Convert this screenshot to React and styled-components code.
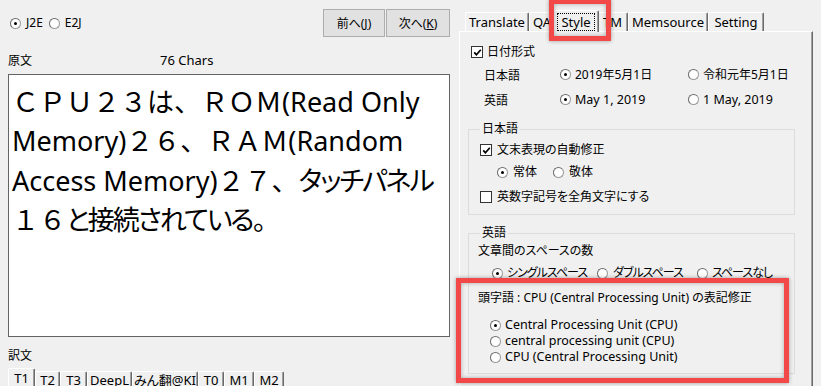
import React from "react";
import styled, { createGlobalStyle } from "styled-components";

const GlobalStyle = createGlobalStyle`
  html, body {
    margin: 0;
    padding: 0;
    background: #f0f0f0;
  }
  body {
    font-family: "Noto Sans", "Noto Sans CJK JP", sans-serif;
    color: #000;
  }
`;

const Window = styled.div`
  position: relative;
  display: flex;
  width: 821px;
  height: 386px;
  overflow: hidden;
  background: #f0f0f0;
  font-size: 12px;
  font-feature-settings: "palt";
`;

/* ---------- left pane ---------- */

const LeftPane = styled.div`
  width: 459px;
  flex: none;
  box-sizing: border-box;
  padding: 9px 9px 0 8px;
  display: flex;
  flex-direction: column;
`;

const TopRow = styled.div`
  display: flex;
  align-items: center;
  justify-content: space-between;
  height: 28px;
`;

const ModeGroup = styled.div`
  display: flex;
  align-items: center;
  gap: 6px;
  padding-left: 2px;
`;

const Option = styled.label`
  display: inline-flex;
  align-items: center;
  gap: ${(p) => p.$gap || 5}px;
  width: ${(p) => (p.$w ? `${p.$w}px` : "auto")};
  flex: none;
  font-size: ${(p) => p.$size || 12}px;
  letter-spacing: ${(p) => p.$track || 0}px;
  line-height: 16px;
  white-space: nowrap;
`;

const Radio = styled.span`
  position: relative;
  flex: none;
  width: 9px;
  height: 9px;
  border-radius: 50%;
  border: 1px solid #9a9a9a;
  border-top-color: #6a6a6a;
  border-left-color: #6a6a6a;
  background: #fff;

  &::after {
    content: "";
    position: absolute;
    left: 3px;
    top: 3px;
    width: 3px;
    height: 3px;
    border-radius: 50%;
    background: ${(p) => (p.$checked ? "#000" : "transparent")};
  }
`;

const Box = styled.span`
  flex: none;
  width: 10px;
  height: 10px;
  border: 1px solid #333;
  background: #fff;
  display: inline-flex;
  align-items: center;
  justify-content: center;
`;

const ButtonGroup = styled.div`
  display: flex;
  gap: 1px;
`;

const Button = styled.button`
  width: ${(p) => p.$w}px;
  height: 28px;
  padding: 0;
  border: 1px solid #adadad;
  background: #e1e1e1;
  color: #000;
  font-family: inherit;
  font-size: 12px;
`;

const LabelRow = styled.div`
  display: flex;
  align-items: center;
  height: 16px;
  margin-top: ${(p) => p.$top}px;
  font-size: 12px;
`;

const FieldLabel = styled.span`
  width: ${(p) => (p.$w ? `${p.$w}px` : "auto")};
  font-size: ${(p) => p.$size || 12}px;
`;

const SourceBox = styled.div`
  margin-top: 6px;
  height: 263px;
  box-sizing: border-box;
  border: 1px solid #646464;
  background: #fff;
  padding: 7px 0 0 3px;
  font-size: 27px;
  line-height: 39.4px;
  white-space: nowrap;
  font-feature-settings: normal;
`;

const Kana = styled.span`
  font-feature-settings: "palt";
  letter-spacing: -2px;
`;

const TabRow = styled.div`
  display: flex;
  align-items: flex-end;
  height: ${(p) => p.$h}px;
  margin-top: ${(p) => p.$top || 0}px;
  padding-left: ${(p) => p.$pad || 0}px;
  flex: none;
`;

const Tab = styled.div`
  position: relative;
  z-index: ${(p) => (p.$active ? 2 : 1)};
  width: ${(p) => p.$w}px;
  height: ${(p) => (p.$active ? p.$h + 3 : p.$h)}px;
  margin: ${(p) => (p.$active && p.$lift ? "0 -2px -1px" : "0")};
  box-sizing: border-box;
  flex: none;
  display: flex;
  align-items: ${(p) => (p.$lift ? "center" : "flex-start")};
  justify-content: center;
  padding-top: ${(p) => (p.$lift ? 0 : p.$active ? 1 : 0)}px;
  background: #f0f0f0;
  border-top: 1px solid #fff;
  border-left: 1px solid #fff;
  border-right: 1px solid #696969;
  border-radius: 2px 2px 0 0;
  box-shadow: inset -1px 0 0 #a0a0a0;
  font-size: 13px;
  line-height: 16px;
  white-space: nowrap;
`;

const Focus = styled.span`
  border: 1px dotted #000;
  padding: 0 3px;
`;

/* ---------- right pane ---------- */

const RightPane = styled.div`
  flex: 1;
  box-sizing: border-box;
  padding: 10px 8px 0 0;
  display: flex;
  flex-direction: column;
`;

const Panel = styled.div`
  flex: 1;
  box-sizing: border-box;
  border-top: 1px solid #fff;
  border-left: 1px solid #fff;
  border-right: 1px solid #696969;
  box-shadow: inset -1px 0 0 #a0a0a0;
  padding: 11px 17px 0 8px;
  display: flex;
  flex-direction: column;
`;

const CheckRow = styled.div`
  display: flex;
  align-items: center;
  height: ${(p) => p.$h || 18}px;
  margin-top: ${(p) => p.$top || 0}px;
  padding-left: ${(p) => p.$pad || 0}px;
`;

const DateGrid = styled.div`
  display: grid;
  grid-template-columns: 76px 128px auto;
  grid-auto-rows: 25px;
  align-items: center;
  margin-top: 1px;
  padding-left: 16px;
`;

const Group = styled.fieldset`
  margin: ${(p) => p.$top}px 0 0;
  padding: ${(p) => p.$padTop}px 10px ${(p) => p.$padBottom}px 11px;
  border: 1px solid #dcdcdc;
  min-width: 0;
`;

const Legend = styled.legend`
  padding: 0 2px;
  font-size: 12px;
  line-height: 16px;
`;

const OptionRow = styled.div`
  display: flex;
  align-items: center;
  height: ${(p) => p.$h}px;
  margin-top: ${(p) => p.$top || 0}px;
  padding-left: ${(p) => p.$pad || 0}px;
`;

const PlainLabel = styled.div`
  height: ${(p) => p.$h}px;
  margin-top: ${(p) => p.$top || 0}px;
  margin-left: -2px;
  display: flex;
  align-items: center;
  font-size: 12px;
  white-space: nowrap;
`;

const OptionList = styled.div`
  margin-top: 11px;
  padding-left: 10px;
  display: flex;
  flex-direction: column;
`;

const Highlight = styled.div`
  position: absolute;
  left: ${(p) => p.$x}px;
  top: ${(p) => p.$y}px;
  width: ${(p) => p.$w}px;
  height: ${(p) => p.$h}px;
  box-sizing: border-box;
  border: 5px solid #f24848;
  box-shadow: 0 0 4px rgba(0, 0, 0, 0.35), inset 0 0 4px rgba(0, 0, 0, 0.3);
  pointer-events: none;
  z-index: 10;
`;

const Tick = () => (
  <svg width="9" height="9" viewBox="0 0 9 9">
    <path d="M1.2 4.4 L3.4 6.7 L7.8 1.8" fill="none" stroke="#000" strokeWidth="1.7" />
  </svg>
);

const CheckBox = ({ checked, children, gap = 4 }) => (
  <Option $gap={gap}>
    <Box>{checked && <Tick />}</Box>
    {children}
  </Option>
);

const RadioOption = ({ checked, children, w, gap = 5, size, track }) => (
  <Option $w={w} $gap={gap} $size={size} $track={track}>
    <Radio $checked={checked} />
    {children}
  </Option>
);

const topTabs = [
  { label: "Translate", w: 64 },
  { label: "QA", w: 26 },
  { label: "Style", w: 46, active: true },
  { label: "TM", w: 31 },
  { label: "Memsource", w: 80 },
  { label: "Setting", w: 56 },
];

const bottomTabs = [
  { label: "T1", w: 27, active: true },
  { label: "T2", w: 25 },
  { label: "T3", w: 27 },
  { label: "DeepL", w: 45 },
  { label: "みん翻@KI", w: 66 },
  { label: "T0", w: 26 },
  { label: "M1", w: 30 },
  { label: "M2", w: 30 },
];

export default function App() {
  return (
    <>
      <GlobalStyle />
      <Window>
        <LeftPane>
          <TopRow>
            <ModeGroup>
              <RadioOption checked>J2E</RadioOption>
              <RadioOption>E2J</RadioOption>
            </ModeGroup>
            <ButtonGroup>
              <Button $w={62}>
                前へ(<u>J</u>)
              </Button>
              <Button $w={64}>
                次へ(<u>K</u>)
              </Button>
            </ButtonGroup>
          </TopRow>

          <LabelRow $top={15}>
            <FieldLabel $w={152}>原文</FieldLabel>
            <FieldLabel $size={13}>76 Chars</FieldLabel>
          </LabelRow>

          <SourceBox>
            <div>ＣＰＵ２３は、ＲＯＭ(Read Only</div>
            <div>Memory)２６、ＲＡＭ(Random</div>
            <div>
              Access Memory)２７、<Kana>タッチパネル</Kana>
            </div>
            <div>
              １６<Kana>と接続されている。</Kana>
            </div>
          </SourceBox>

          <LabelRow $top={10}>
            <FieldLabel>訳文</FieldLabel>
          </LabelRow>

          <TabRow $h={18} $top={5}>
            {bottomTabs.map((t) => (
              <Tab key={t.label} $w={t.w} $h={15} $active={t.active}>
                {t.label}
              </Tab>
            ))}
          </TabRow>
        </LeftPane>

        <RightPane>
          <TabRow $h={21} $pad={6}>
            {topTabs.map((t) => (
              <Tab key={t.label} $w={t.w} $h={19} $active={t.active} $lift>
                {t.active ? <Focus>{t.label}</Focus> : t.label}
              </Tab>
            ))}
          </TabRow>

          <Panel>
            <CheckRow $pad={3}>
              <CheckBox checked>日付形式</CheckBox>
            </CheckRow>
            <DateGrid>
              <span>日本語</span>
              <RadioOption checked gap={4}>2019年5月1日</RadioOption>
              <RadioOption gap={4}>令和元年5月1日</RadioOption>
              <span>英語</span>
              <RadioOption checked gap={4} size={12.5}>May 1, 2019</RadioOption>
              <RadioOption gap={4} size={12.5}>1 May, 2019</RadioOption>
            </DateGrid>

            <Group $top={9} $padTop={3} $padBottom={7}>
              <Legend>日本語</Legend>
              <CheckRow $h={20}>
                <CheckBox checked gap={5}>文末表現の自動修正</CheckBox>
              </CheckRow>
              <OptionRow $h={20} $top={2} $pad={17}>
                <RadioOption checked w={56} gap={5}>常体</RadioOption>
                <RadioOption gap={5}>敬体</RadioOption>
              </OptionRow>
              <CheckRow $h={20} $top={5}>
                <CheckBox gap={5}>英数字記号を全角文字にする</CheckBox>
              </CheckRow>
            </Group>

            <Group $top={10} $padTop={1} $padBottom={8}>
              <Legend>英語</Legend>
              <PlainLabel $h={16}>文章間のスペースの数</PlainLabel>
              <OptionRow $h={18} $top={6} $pad={12}>
                <RadioOption checked w={105} gap={4} track={-1}>シングルスペース</RadioOption>
                <RadioOption w={100} gap={5} track={-1}>ダブルスペース</RadioOption>
                <RadioOption gap={4} track={-1}>スペースなし</RadioOption>
              </OptionRow>
              <PlainLabel $h={18} $top={6}>
                頭字語 : CPU (Central Processing Unit) の表記修正
              </PlainLabel>
              <OptionList>
                <RadioOption checked gap={4} size={12.5}>Central Processing Unit (CPU)</RadioOption>
                <RadioOption gap={4} size={12.5}>central processing unit (CPU)</RadioOption>
                <RadioOption gap={4} size={12.5}>CPU (Central Processing Unit)</RadioOption>
              </OptionList>
            </Group>
          </Panel>
        </RightPane>

        <Highlight $x={549} $y={-1} $w={62} $h={42} />
        <Highlight $x={456} $y={278} $w={333} $h={105} />
      </Window>
    </>
  );
}
